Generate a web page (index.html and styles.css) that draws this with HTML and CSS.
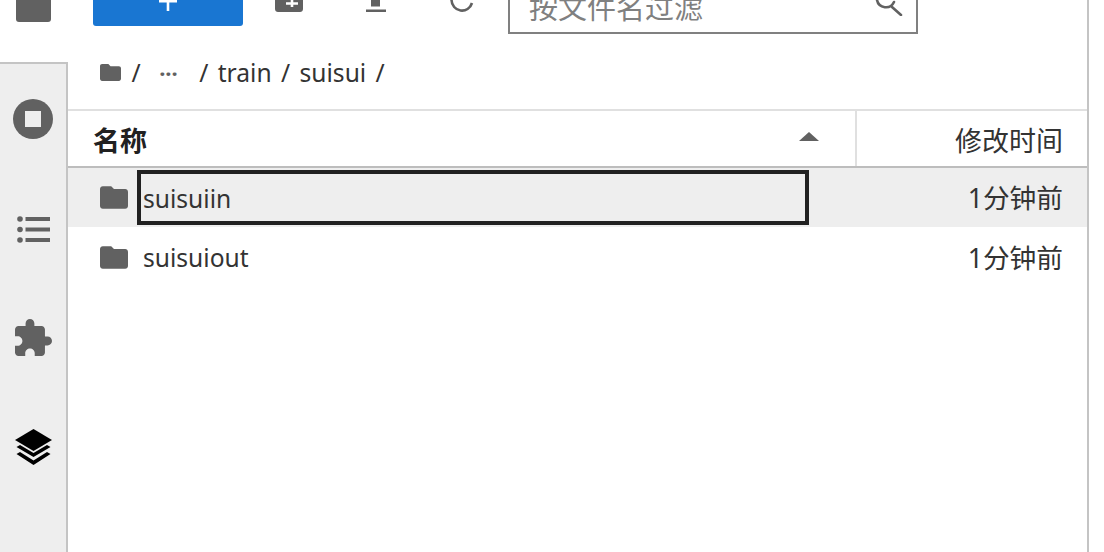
FILE: index.html
```html
<!DOCTYPE html>
<html lang="zh">
<head>
<meta charset="utf-8">
<title>文件浏览器</title>
<link rel="stylesheet" href="styles.css">
</head>
<body>
<div class="app">
  <nav class="rail">
    <div class="rail-active"><span class="rail-top-icon"></span></div>
    <div class="rail-tabs">
      <div class="rail-tab">
        <svg class="ico-stop" viewBox="0 0 40 40"><circle cx="20" cy="20" r="20" fill="#616161"/><rect x="12" y="12" width="16" height="16" fill="#eee"/></svg>
      </div>
      <div class="rail-tab">
        <svg class="ico-list" viewBox="0 0 33 27"><g fill="#616161"><circle cx="3" cy="3" r="2.8"/><circle cx="3" cy="13.5" r="2.8"/><circle cx="3" cy="24" r="2.8"/><rect x="8.5" y="1" width="24.5" height="4"/><rect x="8.5" y="11.5" width="24.5" height="4"/><rect x="8.5" y="22" width="24.5" height="4"/></g></svg>
      </div>
      <div class="rail-tab">
        <svg class="ico-puzzle" viewBox="2 1 21 21"><path fill="#616161" d="M20.5 11H19V7c0-1.1-.9-2-2-2h-4V3.5C13 2.12 11.88 1 10.5 1S8 2.12 8 3.5V5H4c-1.1 0-1.99.9-1.99 2v3.8H3.5c1.49 0 2.7 1.21 2.7 2.7s-1.21 2.7-2.7 2.7H2V20c0 1.1.9 2 2 2h3.8v-1.5c0-1.49 1.21-2.7 2.7-2.7 1.49 0 2.7 1.21 2.7 2.7V22H17c1.1 0 2-.9 2-2v-4h1.5c1.38 0 2.5-1.12 2.5-2.5S21.88 11 20.5 11z"/></svg>
      </div>
      <div class="rail-tab">
        <svg class="ico-layers" viewBox="0 0 37 36"><path d="M18.500 0 37 11 18.500 22 0 11z" fill="#000"/><path d="M5 16 1.500 18 18.500 28 35.500 18 32 16 18.500 24z" fill="#000"/><path d="M5 23 1.500 25 18.500 36 35.500 25 32 23 18.500 31.500z" fill="#000"/></svg>
      </div>
    </div>
  </nav>

  <main class="browser">
    <div class="toolbar">
      <button class="launcher" type="button" aria-label="新建">
        <svg class="ico-plus" viewBox="0 0 18 11"><path fill="#fff" d="M0 0h18v2.500H10.300V11H7.700V2.500H0z"/></svg>
      </button>
      <svg class="ico-newfolder" viewBox="0 0 28 12"><path fill="#616161" d="M0 0h28v9c0 1.700-1.300 3-3 3H3c-1.700 0-3-1.300-3-3z"/><path fill="#fff" d="M15.700 0h2.600v2.200H23v2.500h-4.700V7h-2.600V4.700H11V2.200h4.700z"/></svg>
      <svg class="ico-upload" viewBox="0 0 20 12"><path fill="#616161" d="M5 0h9v6.500H5zM0 9.500h20V12H0z"/></svg>
      <svg class="ico-refresh" viewBox="0 0 24 14"><path fill="none" stroke="#616161" stroke-width="2.600" d="M1.500 0a10.500 11 0 0 0 20.500 3"/></svg>
      <div class="filter">
        <span class="filter-text">按文件名过滤</span>
        <svg class="ico-search" viewBox="0 0 28 16"><path fill="none" stroke="#616161" stroke-width="2.600" stroke-linecap="round" d="M2 0a9 9 0 0 0 17 2M17 7l9 8"/></svg>
      </div>
    </div>

    <div class="crumbs">
      <svg class="ico-folder-sm" viewBox="2 4 20 16"><path fill="#616161" d="M10 4H4c-1.100 0-2 .9-2 2v12c0 1.100.9 2 2 2h16c1.100 0 2-.9 2-2V8c0-1.100-.9-2-2-2h-8l-2-2z"/></svg>
      <span class="sep-first">/</span>
      <span class="dots">···</span>
      <span class="path">/ train / suisui /</span>
    </div>

    <div class="head">
      <div class="head-name"><span>名称</span><i class="sort-arrow"></i></div>
      <div class="head-time">修改时间</div>
    </div>

    <div class="row row-selected">
      <svg class="ico-folder" viewBox="2 4 20 16"><path fill="#616161" d="M10 4H4c-1.100 0-2 .9-2 2v12c0 1.100.9 2 2 2h16c1.100 0 2-.9 2-2V8c0-1.100-.9-2-2-2h-8l-2-2z"/></svg>
      <div class="name-edit">suisuiin</div>
      <div class="time">1分钟前</div>
    </div>
    <div class="row">
      <svg class="ico-folder" viewBox="2 4 20 16"><path fill="#616161" d="M10 4H4c-1.100 0-2 .9-2 2v12c0 1.100.9 2 2 2h16c1.100 0 2-.9 2-2V8c0-1.100-.9-2-2-2h-8l-2-2z"/></svg>
      <div class="name">suisuiout</div>
      <div class="time">1分钟前</div>
    </div>
  </main>
</div>
</body>
</html>
```
FILE: styles.css
```css
* {
  box-sizing: border-box;
}

html,
body {
  margin: 0;
  height: 100%;
  background: #fff;
  overflow: hidden;
}

body {
  font-family: "Noto Sans", "Noto Sans CJK SC", sans-serif;
  color: #333;
}

.app {
  display: flex;
  width: 1104px;
  height: 552px;
}

.rail {
  flex: 0 0 68px;
  display: flex;
  flex-direction: column;
}

.rail-active {
  height: 62px;
  padding-left: 16px;
}

.rail-top-icon {
  display: block;
  width: 35px;
  height: 22px;
  background: #616161;
  border-radius: 0 0 3px 3px;
}

.rail-tabs {
  flex: 1;
  background: #eee;
  border-top: 2px solid #c4c4c4;
  border-right: 2px solid #c4c4c4;
}

.rail-tab {
  height: 110px;
  display: flex;
  align-items: center;
  justify-content: center;
}

.ico-stop {
  width: 40px;
  height: 40px;
}

.ico-list {
  width: 33px;
  height: 27px;
}

.ico-puzzle {
  width: 37px;
  height: 37px;
  margin-top: -3px;
  margin-left: 1px;
}

.ico-layers {
  width: 37px;
  height: 36px;
  margin-top: -4px;
}

.browser {
  flex: 0 0 1021px;
  display: flex;
  flex-direction: column;
  border-right: 2px solid #c4c4c4;
}

.toolbar {
  height: 34px;
  display: flex;
  align-items: flex-start;
  padding-left: 25px;
}

.launcher {
  width: 150px;
  height: 26px;
  padding: 0;
  border: 0;
  background: #1976d2;
  border-radius: 0 0 3px 3px;
  display: flex;
  justify-content: center;
  align-items: flex-start;
}

.ico-plus {
  width: 18px;
  height: 11px;
}

.ico-newfolder {
  width: 28px;
  height: 12px;
  margin-left: 32px;
}

.ico-upload {
  width: 20px;
  height: 12px;
  margin-left: 63px;
}

.ico-refresh {
  width: 24px;
  height: 14px;
  margin-left: 64px;
}

.filter {
  width: 410px;
  height: 34px;
  margin-left: 34px;
  border: 2px solid #808080;
  border-top: 0;
  display: flex;
  justify-content: space-between;
  align-items: flex-start;
  padding: 0 13px 0 19px;
}

.filter-text {
  font-size: 29px;
  line-height: 30px;
  margin-top: -7px;
  color: #808080;
}

.ico-search {
  width: 28px;
  height: 16px;
}

.crumbs {
  height: 75px;
  display: flex;
  align-items: center;
  padding: 2px 0 0 32px;
  font-size: 24.6px;
  line-height: 30px;
  word-spacing: 3px;
}

.ico-folder-sm {
  width: 21px;
  height: 17px;
}

.sep-first {
  margin-left: 10.5px;
}

.dots {
  margin-left: 18.5px;
  width: 40px;
  font-size: 22px;
  font-weight: 700;
  color: #616161;
}

.path {
  white-space: pre;
}

.head {
  height: 59px;
  display: flex;
  border-top: 2px solid #e0e0e0;
  border-bottom: 2px solid #bdbdbd;
  font-size: 27px;
}

.head-name {
  width: 787px;
  display: flex;
  align-items: center;
  justify-content: space-between;
  padding: 2px 36px 0 25px;
  font-weight: 700;
  color: #212121;
}

.sort-arrow {
  width: 0;
  height: 0;
  margin-top: -6px;
  border-left: 10px solid transparent;
  border-right: 10px solid transparent;
  border-bottom: 9px solid #616161;
}

.head-time {
  flex: 1;
  border-left: 2px solid #e0e0e0;
  display: flex;
  align-items: center;
  justify-content: flex-end;
  padding: 2px 24px 0 0;
}

.row {
  height: 60px;
  display: flex;
  align-items: center;
  padding: 0 24px 0 32px;
  font-size: 24.6px;
}

.row-selected {
  height: 59px;
  background: #eee;
}

.ico-folder {
  flex: none;
  width: 28px;
  height: 23px;
}

.name {
  margin-left: 15px;
}

.name-edit {
  width: 672px;
  height: 55px;
  margin-left: 9px;
  border: 4px solid #212121;
  display: flex;
  align-items: center;
  padding: 2px 0 0 2px;
}

.time {
  margin: -2px 0 0 auto;
  font-size: 26.7px;
}
```
